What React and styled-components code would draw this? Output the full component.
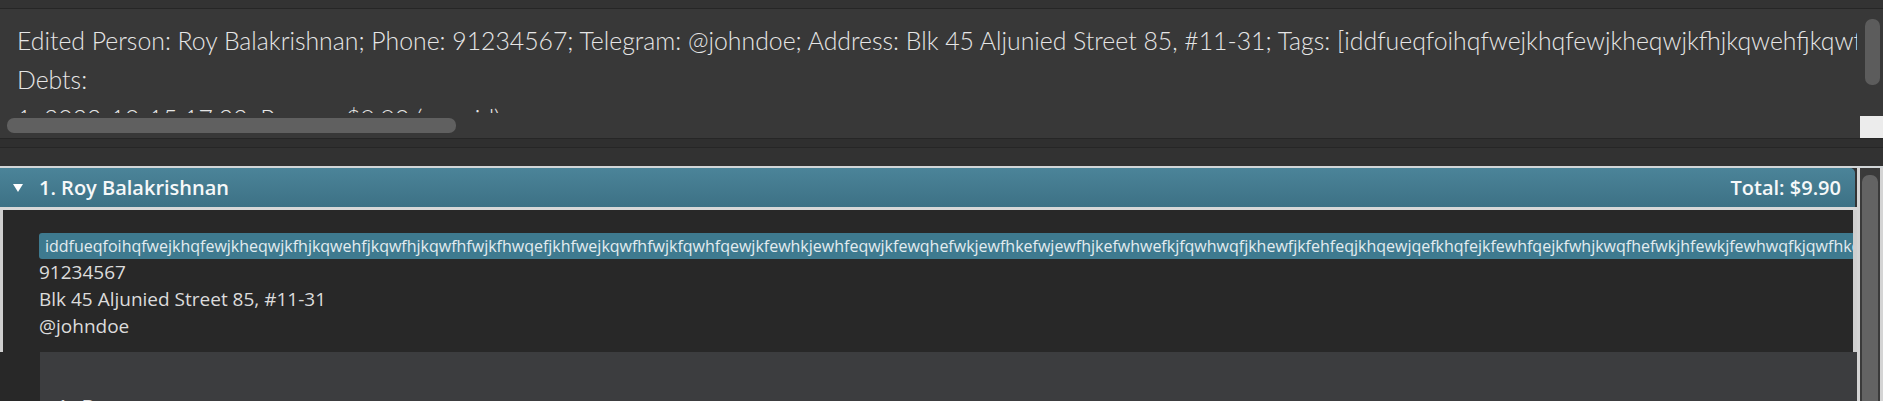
import React from 'react';
import styled, { createGlobalStyle } from 'styled-components';

const GlobalStyle = createGlobalStyle`
  html, body {
    margin: 0;
    padding: 0;
    background: #333333;
    overflow: hidden;
  }
  body {
    width: 1883px;
    height: 401px;
  }
`;

const Window = styled.div`
  width: 1883px;
  height: 401px;
  padding-top: 8px;
  box-sizing: border-box;
  display: flex;
  flex-direction: column;
  background: #333333;
  overflow: hidden;
`;

const ResultPanel = styled.div`
  height: 129px;
  flex-shrink: 0;
  display: flex;
  background: #383838;
  border-top: 1px solid #262626;
  border-bottom: 1px solid #262626;
`;

const ResultMain = styled.div`
  flex: 1;
  min-width: 0;
  display: flex;
  flex-direction: column;
`;

const ResultText = styled.div`
  height: 104px;
  flex-shrink: 0;
  overflow: hidden;
  padding: 12px 0 0 17px;
  box-sizing: border-box;
  font-family: 'Lato', 'Open Sans', sans-serif;
  font-weight: 300;
  font-size: 24.8px;
  line-height: 39px;
  color: #e6e6e6;
  white-space: nowrap;
`;

const HScroll = styled.div`
  flex: 1;
  padding: 5px 7px;
`;

const HThumb = styled.div`
  width: 449px;
  height: 15px;
  border-radius: 7px;
  background: #606060;
`;

const VScrollCol = styled.div`
  width: 26px;
  flex-shrink: 0;
  display: flex;
  flex-direction: column;
  justify-content: space-between;
  align-items: flex-end;
  padding: 10px 3px 0 0;
  box-sizing: border-box;
`;

const VThumb = styled.div`
  width: 15px;
  height: 66px;
  border-radius: 7px;
  background: #5c5c5c;
`;

const Corner = styled.div`
  width: 23px;
  height: 22px;
  background: #ececec;
  margin-right: -3px;
`;

const Divider = styled.div`
  height: 8px;
  flex-shrink: 0;
  border-bottom: 1px solid #262626;
  background: #2f2f2f;
`;

const Gap = styled.div`
  height: 18px;
  flex-shrink: 0;
  background: #323232;
`;

const ListPanel = styled.div`
  flex: 1;
  display: flex;
  border-top: 2px solid #d2d6d8;
  min-height: 0;
`;

const Cards = styled.div`
  flex: 1;
  min-width: 0;
  display: flex;
  flex-direction: column;
`;

const CardHeader = styled.div`
  height: 39px;
  flex-shrink: 0;
  display: flex;
  align-items: center;
  justify-content: space-between;
  padding: 0 14px 0 13px;
  background: linear-gradient(#4b8499, #3d7185);
  border-radius: 0 5px 0 0;
  margin-right: 2px;
  color: #f6f8f9;
  font-family: 'Open Sans', 'Noto Sans', sans-serif;
  font-size: 20px;
  font-weight: 600;
`;

const Title = styled.div`
  display: flex;
  align-items: center;
  gap: 16px;
`;

const Arrow = styled.svg`
  width: 10px;
  height: 8px;
  display: block;
`;

const CardBody = styled.div`
  flex: 1;
  display: flex;
  flex-direction: column;
  background: #282828;
  border-top: 3px solid #d8d8d8;
  overflow: hidden;
`;

const Details = styled.div`
  flex-shrink: 0;
  display: flex;
  flex-direction: column;
  border-left: 3px solid #cfcfcf;
  border-right: 4px solid #cfcfcf;
  padding: 23px 0 12px 36px;
  overflow: hidden;
`;

const Tag = styled.div`
  height: 26px;
  flex-shrink: 0;
  border-radius: 3px 0 0 3px;
  background: #3e7a8f;
  color: #e3ecef;
  font-family: 'Open Sans', 'Noto Sans', sans-serif;
  font-size: 16px;
  line-height: 26px;
  padding-left: 6px;
  white-space: nowrap;
  overflow: hidden;
`;

const Line = styled.div`
  font-family: 'Open Sans', 'Noto Sans', sans-serif;
  font-size: 19px;
  line-height: 27px;
  color: #dcdcdc;
`;

const DebtBox = styled.div`
  flex: 1;
  margin-left: 40px;
  background: #3c3d3f;
  padding: 40px 0 0 16px;
  font-family: 'Open Sans', 'Noto Sans', sans-serif;
  font-size: 23px;
  color: #e0e0e0;
`;

const ListScroll = styled.div`
  width: 26px;
  flex-shrink: 0;
  background: #3a3a3a;
  border-left: 3px solid #d4d4d4;
  border-right: 3px solid #d4d4d4;
  box-sizing: border-box;
  padding: 7px 2px 0 2px;
`;

const ListThumb = styled.div`
  height: 260px;
  border-radius: 7px;
  background: #636363;
`;

const tags =
  'iddfueqfoihqfwejkhqfewjkheqwjkfhjkqwehfjkqwfhjkqwfhfwjkfhwqefjkhfwejkqwfhfwjkfqwhfqewjkfewhkjewhfeqwjkfewqhefwkjewfhkefwjewfhjkefwhwefkjfqwhwqfjkhewfjkfehfeqjkhqewjqefkhqfejkfewhfqejkfwhjkwqfhefwkjhfewkjfewhwqfkjqwfhkqwefjkhqwefkjhqwf';

const ResultDisplay = () => (
  <ResultPanel>
    <ResultMain>
      <ResultText>
        <div>
          Edited Person: Roy Balakrishnan; Phone: 91234567; Telegram: @johndoe; Address: Blk 45
          Aljunied Street 85, #11-31; Tags: [{tags}]
        </div>
        <div>Debts:</div>
        <div>1. 2022-10-15 17:22: Person: $9.90 (unpaid)</div>
      </ResultText>
      <HScroll>
        <HThumb />
      </HScroll>
    </ResultMain>
    <VScrollCol>
      <VThumb />
      <Corner />
    </VScrollCol>
  </ResultPanel>
);

const PersonCard = () => (
  <Cards>
    <CardHeader>
      <Title>
        <Arrow viewBox="0 0 10 8">
          <path d="M0 0 L10 0 L5 8 Z" fill="#ffffff" />
        </Arrow>
        <span>1. Roy Balakrishnan</span>
      </Title>
      <span>Total: $9.90</span>
    </CardHeader>
    <CardBody>
      <Details>
        <Tag>{tags}</Tag>
        <Line>91234567</Line>
        <Line>Blk 45 Aljunied Street 85, #11-31</Line>
        <Line>@johndoe</Line>
      </Details>
      <DebtBox>1. Person</DebtBox>
    </CardBody>
  </Cards>
);

export default function App() {
  return (
    <Window>
      <GlobalStyle />
      <ResultDisplay />
      <Divider />
      <Gap />
      <ListPanel>
        <PersonCard />
        <ListScroll>
          <ListThumb />
        </ListScroll>
      </ListPanel>
    </Window>
  );
}
